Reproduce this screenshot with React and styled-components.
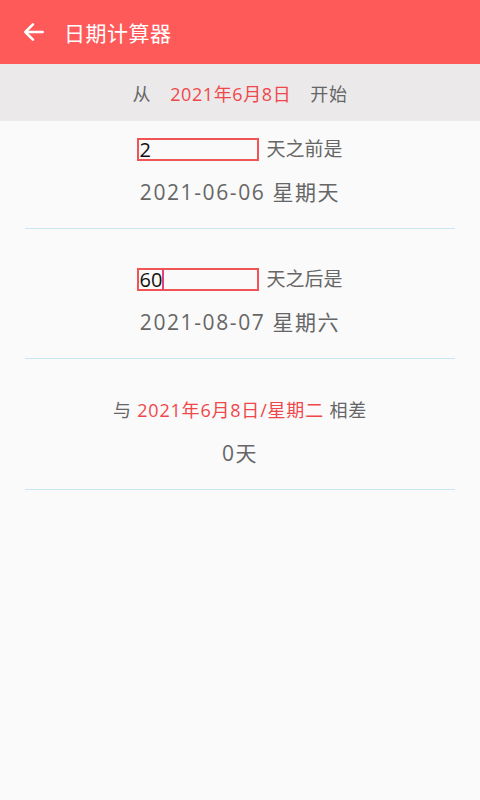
import React from 'react'
import styled, { createGlobalStyle } from 'styled-components'

const Global = createGlobalStyle`
body {
  margin: 0;
  background: #fafafa;
  font-family: "Open Sans", "Noto Sans CJK SC", sans-serif;
}
`

const Page = styled.div`
width: 480px;
min-height: 800px;
background: #fafafa;
`

const Bar = styled.header`
height: 64px;
background: #ff5a5a;
display: flex;
align-items: center;
padding-left: 21px;
color: #fff;
`

const Back = styled.svg`
width: 26px;
height: 26px;
margin-right: 17px;
`

const Title = styled.h1`
margin: 0;
font-size: 21px;
font-weight: 400;
letter-spacing: 0.5px;
`

const StartRow = styled.div`
height: 57px;
background: #ebe9ea;
display: flex;
align-items: center;
justify-content: center;
font-size: 18px;
color: #666;
gap: 19px;
letter-spacing: 0.6px;
`

const Red = styled.span`
color: #f0474b;
`

const Section = styled.section`
margin: 0 25px;
height: ${p => p.$height}px;
box-sizing: border-box;
border-bottom: 1px solid #c6e8ee;
display: flex;
flex-direction: column;
align-items: center;
padding-top: ${p => p.$top}px;
`

const InputRow = styled.div`
display: flex;
align-items: center;
gap: 7px;
height: 23px;
`

const Field = styled.div`
width: 118px;
height: 19px;
border: 2px solid #f05454;
font-size: 20px;
line-height: 19px;
color: #111;
display: flex;
align-items: center;
`

const Caret = styled.span`
width: 2px;
height: 21px;
background: #e8417a;
`

const Label = styled.span`
font-size: 19px;
line-height: 23px;
color: #666;
`

const Result = styled.div`
margin-top: 16px;
font-size: 21px;
line-height: 30px;
color: #666;
letter-spacing: 1.6px;
`

const Diff = styled.div`
font-size: 18px;
line-height: 24px;
color: #666;
letter-spacing: 0.8px;
`

const Days = ({ value, label, result, caret, top, height }) => (
  <Section $top={top} $height={height}>
    <InputRow>
      <Field>
        {value}
        {caret && <Caret />}
      </Field>
      <Label>{label}</Label>
    </InputRow>
    <Result>{result}</Result>
  </Section>
)

export default function App() {
  return (
    <Page>
      <Global />
      <Bar>
        <Back viewBox="0 0 24 24" fill="none" stroke="#fff" strokeWidth="2.4" strokeLinecap="round" strokeLinejoin="round">
          <path d="M20 12H5" />
          <path d="M11 5l-7 7 7 7" />
        </Back>
        <Title>日期计算器</Title>
      </Bar>
      <StartRow>
        <span>从</span>
        <Red>2021年6月8日</Red>
        <span>开始</span>
      </StartRow>
      <Days top={17} height={108} value="2" label="天之前是" result="2021-06-06 星期天" />
      <Days top={39} height={130} value="60" caret label="天之后是" result="2021-08-07 星期六" />
      <Section $top={39} $height={131}>
        <Diff>
          与 <Red>2021年6月8日/星期二</Red> 相差
        </Diff>
        <Result>0天</Result>
      </Section>
    </Page>
  )
}
